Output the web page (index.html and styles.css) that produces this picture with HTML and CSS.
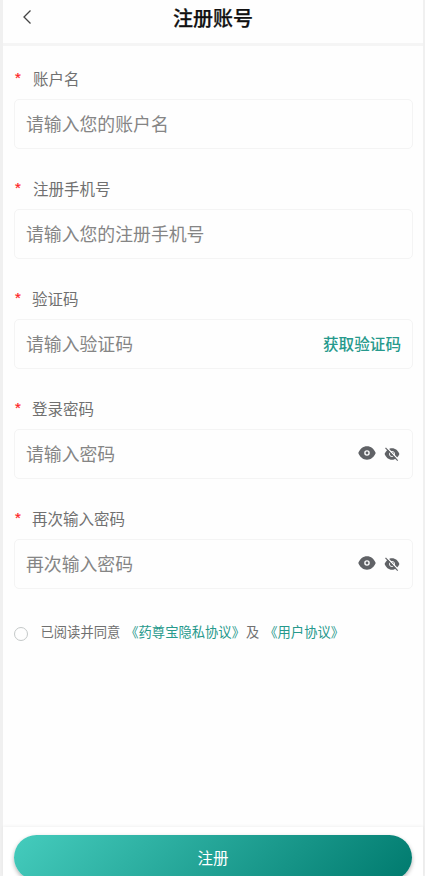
FILE: index.html
```html
<!DOCTYPE html>
<html lang="zh-CN">
<head>
<meta charset="utf-8">
<title>注册账号</title>
<link rel="stylesheet" href="styles.css">
</head>
<body>
<svg width="0" height="0" class="sprite" aria-hidden="true">
  <symbol id="eye" viewBox="0 0 18 14">
    <path fill-rule="evenodd" d="M9 .3C13 .3 16 3 17.7 7 16 11 13 13.7 9 13.7S2 11 .3 7C2 3 5 .3 9 .3ZM9 4.200a2.800 2.800 0 1 0 0 5.600 2.800 2.800 0 0 0 0-5.600Z"/>
    <circle cx="9" cy="7" r="1.400"/>
  </symbol>
  <symbol id="eye-off" viewBox="0 0 16 14">
    <path d="M8 1.200c3.600 0 6 2.400 7.400 5.800C14 10.400 11.600 12.800 8 12.800S2 10.400.6 7C2 3.600 4.400 1.200 8 1.200Z"/>
    <circle cx="8" cy="7" r="2.600" class="iris"/>
    <path d="M2.600.2 15 13.200" class="gap"/>
    <path d="M1.500.8 13.700 13.600" class="slash"/>
  </symbol>
</svg>
<div class="page">
  <header class="header">
    <svg class="back" viewBox="0 0 10 16"><path d="M8.500 1.500 2 8l6.500 6.500"/></svg>
    <h1 class="title">注册账号</h1>
  </header>
  <main class="form">
    <div class="field">
      <div class="label"><span class="star">*</span><span class="name">账户名</span></div>
      <div class="input"><span class="hint">请输入您的账户名</span></div>
    </div>
    <div class="field">
      <div class="label"><span class="star">*</span><span class="name">注册手机号</span></div>
      <div class="input"><span class="hint">请输入您的注册手机号</span></div>
    </div>
    <div class="field">
      <div class="label near"><span class="star">*</span><span class="name">验证码</span></div>
      <div class="input"><span class="hint">请输入验证码</span><span class="code">获取验证码</span></div>
    </div>
    <div class="field">
      <div class="label near"><span class="star">*</span><span class="name">登录密码</span></div>
      <div class="input"><span class="hint">请输入密码</span><svg class="eye"><use href="#eye"/></svg><svg class="eye-off"><use href="#eye-off"/></svg></div>
    </div>
    <div class="field">
      <div class="label near"><span class="star">*</span><span class="name">再次输入密码</span></div>
      <div class="input"><span class="hint">再次输入密码</span><svg class="eye"><use href="#eye"/></svg><svg class="eye-off"><use href="#eye-off"/></svg></div>
    </div>
    <div class="agree">
      <span class="radio"></span>
      <span>已阅读并同意</span><span class="link">《药尊宝隐私协议》</span><span class="and">及</span><span class="link">《用户协议》</span>
    </div>
  </main>
  <footer class="footer"><div class="submit">注册</div></footer>
</div>
</body>
</html>
```
FILE: styles.css
```css
* { box-sizing: border-box; }
body {
  margin: 0;
  height: 876px;
  overflow: hidden;
  background: #f0f0f0;
  font-family: "Noto Sans CJK SC", sans-serif;
  color: #707070;
}
.sprite { position: absolute; }
.page {
  display: flex;
  flex-direction: column;
  height: 876px;
  margin: 0 2px 0 3px;
  background: #fefefe;
}
.header {
  display: flex;
  align-items: center;
  flex: none;
  height: 46px;
  padding: 0 0 8px 19px;
  border-bottom: 3px solid #f5f5f5;
}
.back {
  width: 10px;
  height: 16px;
  margin-bottom: 1px;
  fill: none;
  stroke: #444;
  stroke-width: 1.3;
}
.title {
  flex: 1;
  margin: 0 29px 0 0;
  text-align: center;
  font-size: 20px;
  line-height: 34px;
  font-weight: 500;
  color: #111;
  -webkit-text-stroke: .25px #111;
}
.form { flex: 1; padding: 0 10px 0 11px; }
.field { height: 110px; padding-top: 20px; }
.label {
  display: flex;
  height: 33px;
  line-height: 24px;
  font-size: 15.5px;
}
.star {
  width: 19px;
  padding-left: 1px;
  line-height: 24px;
  font-family: "Liberation Sans", sans-serif;
  font-size: 15px;
  color: #f22;
  -webkit-text-stroke: .2px #f22;
}
.near .star { width: 18px; }
.input {
  display: flex;
  align-items: center;
  height: 50px;
  padding: 0 11px;
  border: 1px solid #f4f4f4;
  border-radius: 5px;
}
.hint { flex: 1; padding-bottom: 2px; font-size: 17.85px; line-height: 26px; color: #858585; }
.code { padding-bottom: 2px; font-size: 15.6px; font-weight: 500; color: #26998c; }
.eye { width: 18px; height: 14px; margin: 0 8px 2px 0; fill: #606266; }
.eye-off { width: 16px; height: 14px; margin: 0 1px 1px 0; fill: #606266; }
.iris { fill: none; stroke: #fefefe; stroke-width: .9; }
.gap { fill: none; stroke: #fefefe; stroke-width: 1.3; }
.slash { fill: none; stroke: #606266; stroke-width: 1.2; }
.agree {
  display: flex;
  align-items: center;
  height: 20px;
  margin-top: 26px;
  font-size: 13.3px;
  line-height: 20px;
  white-space: nowrap;
}
.radio {
  width: 14px;
  height: 14px;
  margin: 3px 12.500px 0 0;
  border: 1px solid #c4c8c8;
  border-radius: 50%;
}
.link { margin-left: 5px; color: #26998c; }
.and { margin-left: 1px; }
.footer {
  flex: none;
  height: 49px;
  padding: 8px 11px 0;
  background: #fff;
  box-shadow: 0 -1px 3px rgba(0, 0, 0, .05);
}
.submit {
  width: 398px;
  height: 45px;
  border-radius: 23px;
  background: linear-gradient(135deg, #45ccbd, #007a6e);
  box-shadow: 0 2px 4px rgba(0, 0, 0, .3);
  color: #fff;
  font-size: 15.5px;
  line-height: 45px;
  text-align: center;
}
```
